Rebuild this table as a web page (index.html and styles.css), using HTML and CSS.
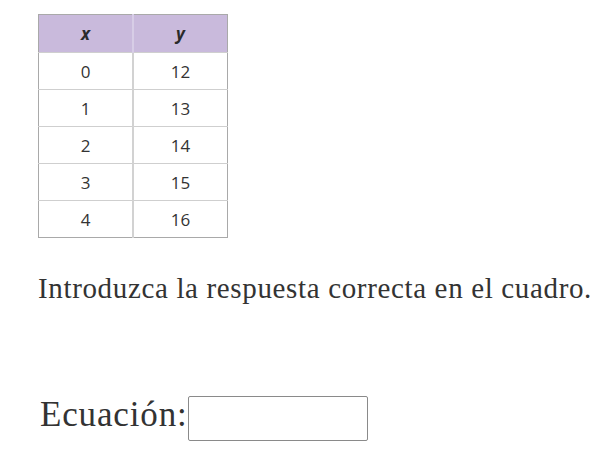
FILE: index.html
```html
<!DOCTYPE html>
<html>
<head>
<meta charset="utf-8">
<link rel="stylesheet" href="styles.css">
</head>
<body>
<div class="page">
  <table class="data">
    <thead>
      <tr><th>x</th><th>y</th></tr>
    </thead>
    <tbody>
      <tr><td>0</td><td>12</td></tr>
      <tr><td>1</td><td>13</td></tr>
      <tr><td>2</td><td>14</td></tr>
      <tr><td>3</td><td>15</td></tr>
      <tr><td>4</td><td>16</td></tr>
    </tbody>
  </table>
  <p class="prompt">Introduzca la respuesta correcta en el cuadro.</p>
  <div class="answer">
    <label class="label" for="eq">Ecuación:</label><input id="eq" class="box" type="text">
  </div>
</div>
</body>
</html>
```
FILE: styles.css
```css
html, body {
  margin: 0;
  padding: 0;
  background: #fff;
}
.page {
  padding: 14px 0 0 38px;
  font-family: "Liberation Serif", "Times New Roman", serif;
  color: #333;
}
.data {
  border-collapse: collapse;
  border: 1px solid #a9a9a9;
  font-family: "Open Sans", "Noto Sans", sans-serif;
  font-size: 17px;
  color: #333;
}
.data th, .data td {
  width: 93px;
  padding: 0;
  text-align: center;
  vertical-align: middle;
}
.data th {
  height: 37px;
  background: #c9badc;
  font-weight: bold;
  font-style: italic;
  font-size: 17px;
  color: #2a2a2a;
  border-left: 2px solid #d7cde6;
}
.data th:first-child, .data td:first-child {
  border-left: none;
}
.data td {
  height: 36px;
  border-top: 1px solid #cfcfcf;
  border-left: 2px solid #d2d2d2;
}
.prompt {
  margin: 33px 0 0 0;
  font-size: 29px;
  line-height: 34px;
  letter-spacing: 0.65px;
}
.answer {
  margin-top: 91px;
  display: flex;
  align-items: flex-start;
}
.label {
  font-size: 35px;
  line-height: 38px;
  letter-spacing: 0.85px;
  margin-left: 2px;
}
.box {
  width: 180px;
  height: 45px;
  box-sizing: border-box;
  border: 1px solid #8a8a8a;
  border-radius: 2px;
  margin: 0;
  padding: 0;
  background: #fff;
}
```
